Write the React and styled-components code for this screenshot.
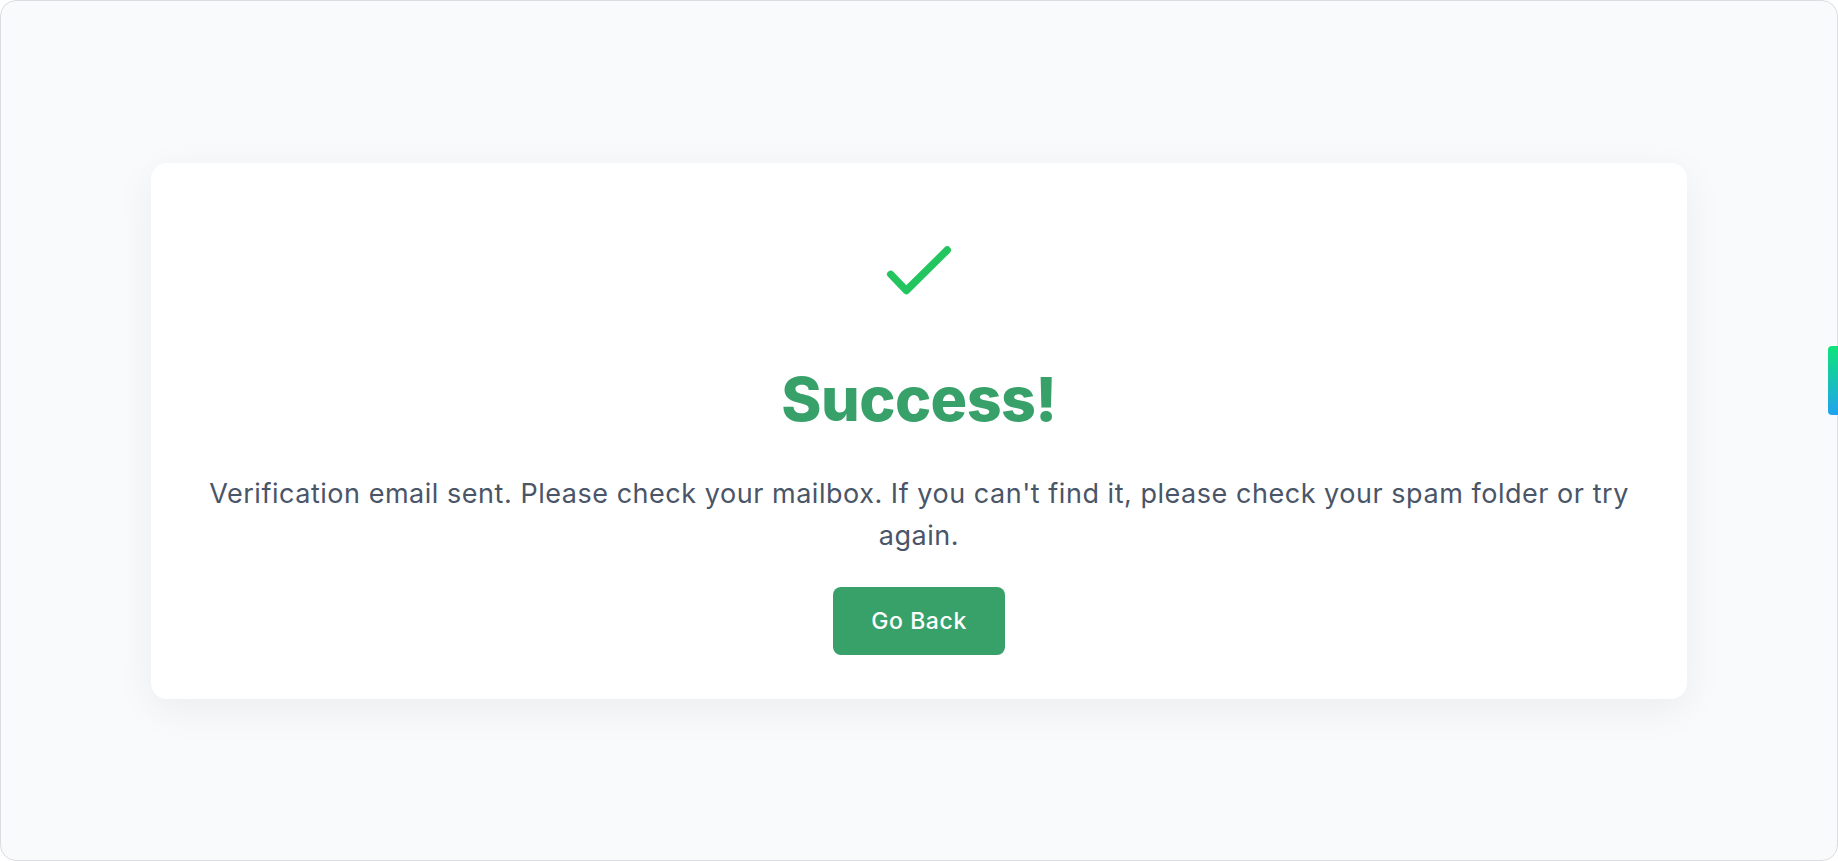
import React from "react";
import styled, { createGlobalStyle } from "styled-components";

const GlobalStyle = createGlobalStyle`
  *, *::before, *::after { box-sizing: border-box; }
  html, body { margin: 0; padding: 0; background: #ffffff; }
  body { font-family: Inter, "Noto Sans", sans-serif; }
`;

const Frame = styled.div`
  height: 861px;
  border: 1px solid #dcdde0;
  border-radius: 16px;
  background: #f9fafb;
  display: flex;
  align-items: center;
  justify-content: center;
  overflow: hidden;
`;

const Card = styled.section`
  width: 1536px;
  background: #ffffff;
  border-radius: 16px;
  box-shadow: 0 10px 40px rgba(17, 24, 39, 0.06);
  padding: 82px 48px 44px;
  display: flex;
  flex-direction: column;
  align-items: center;
  text-align: center;
`;

const CheckIcon = styled.svg`
  display: block;
  width: 72px;
  height: 52px;
`;

const Title = styled.h1`
  margin: 64px 0 0;
  font-family: Inter, "Noto Sans", sans-serif;
  font-weight: 800;
  font-size: 61px;
  line-height: 77px;
  color: #38a169;
  letter-spacing: -0.6px;
`;

const Message = styled.p`
  margin: 35px 0 0;
  font-family: Inter, "Noto Sans", sans-serif;
  font-weight: 400;
  font-size: 27px;
  line-height: 42px;
  color: #4a5568;
  letter-spacing: 0.53px;
`;

const Button = styled.button`
  margin-top: 30px;
  width: 172px;
  height: 68px;
  border: none;
  border-radius: 8px;
  background: #38a169;
  color: #ffffff;
  font-family: Inter, "Noto Sans", sans-serif;
  font-weight: 500;
  font-size: 23px;
  letter-spacing: 0.6px;
  cursor: pointer;
`;

const SideTab = styled.div`
  position: fixed;
  right: 0;
  top: 346px;
  width: 10px;
  height: 69px;
  border-radius: 4px 0 0 4px;
  background: linear-gradient(180deg, #10e37a 0%, #1fa3ee 100%);
`;

export default function App() {
  return (
    <>
      <GlobalStyle />
      <Frame>
        <Card>
          <CheckIcon viewBox="0 0 72 52" fill="none">
            <path
              d="M7.7 29.3 L23.3 45.5 L64.3 5"
              stroke="#22c55e"
              strokeWidth="7.4"
              strokeLinecap="round"
              strokeLinejoin="round"
            />
          </CheckIcon>
          <Title>Success!</Title>
          <Message>
            Verification email sent. Please check your mailbox. If you can't find it, please check your spam folder or try again.
          </Message>
          <Button type="button">Go Back</Button>
        </Card>
      </Frame>
      <SideTab />
    </>
  );
}
